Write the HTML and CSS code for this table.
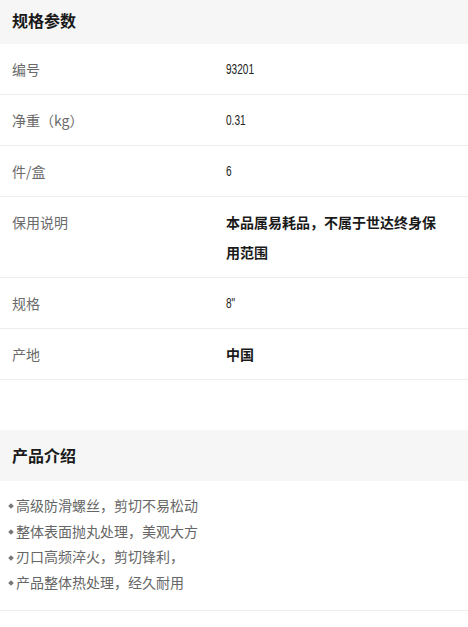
FILE: index.html
```html
<!DOCTYPE html>
<html lang="zh-CN">
<head>
<meta charset="utf-8">
<title>规格参数</title>
<link rel="stylesheet" href="styles.css">
</head>
<body>
<section class="section">
  <h2 class="section-title section-title--first">规格参数</h2>
  <div class="spec-row"><div class="spec-label">编号</div><div class="spec-value"><span class="num">93201</span></div></div>
  <div class="spec-row"><div class="spec-label">净重（kg）</div><div class="spec-value"><span class="num">0.31</span></div></div>
  <div class="spec-row"><div class="spec-label">件/盒</div><div class="spec-value"><span class="num">6</span></div></div>
  <div class="spec-row"><div class="spec-label">保用说明</div><div class="spec-value strong">本品属易耗品，不属于世达终身保用范围</div></div>
  <div class="spec-row"><div class="spec-label">规格</div><div class="spec-value"><span class="num">8"</span></div></div>
  <div class="spec-row"><div class="spec-label">产地</div><div class="spec-value strong">中国</div></div>
</section>
<section class="section section--intro">
  <h2 class="section-title">产品介绍</h2>
  <ul class="intro-list">
    <li class="intro-item">高级防滑螺丝，剪切不易松动</li>
    <li class="intro-item">整体表面抛丸处理，美观大方</li>
    <li class="intro-item">刃口高频淬火，剪切锋利，</li>
    <li class="intro-item">产品整体热处理，经久耐用</li>
  </ul>
</section>
</body>
</html>
```
FILE: styles.css
```css
html, body {
  margin: 0;
  padding: 0;
  background: #fff;
}
body {
  font-family: "Noto Sans CJK SC", "Noto Sans", sans-serif;
  color: #333;
  font-size: 14px;
}
.section-title {
  margin: 0;
  background: #f6f6f6;
  font-size: 16px;
  font-weight: 700;
  color: #1a1a1a;
  line-height: 30px;
  padding: 10px 12px 11px;
}
.section-title--first {
  padding-top: 5px;
  padding-bottom: 9px;
}
.spec-row {
  display: grid;
  grid-template-columns: 214px 1fr;
  padding: 10px 28px 10px 12px;
  border-bottom: 1px solid #ededed;
  line-height: 30px;
}
.spec-label {
  color: #6a6a6a;
  font-size: 14px;
}
.spec-value {
  color: #222;
  font-size: 14px;
  height: auto;
}
.num {
  display: inline-block;
  vertical-align: top;
  line-height: 30px;
  font-family: "Liberation Sans", Arial, sans-serif;
  font-size: 14px;
  transform: scaleX(0.72);
  transform-origin: left center;
}
.spec-value.strong {
  font-weight: 700;
  color: #1a1a1a;
}
.section--intro {
  margin-top: 50px;
}
.intro-list {
  list-style: none;
  margin: 0;
  padding: 12px 12px 14px 8px;
  border-bottom: 1px solid #ededed;
}
.intro-item {
  color: #666;
  font-size: 14px;
  line-height: 25.7px;
  display: flex;
  align-items: center;
}
.intro-item::before {
  content: "";
  width: 4px;
  height: 4px;
  background: #777;
  transform: rotate(45deg);
  margin: 1px 3px 0 1px;
  flex: none;
}
```
